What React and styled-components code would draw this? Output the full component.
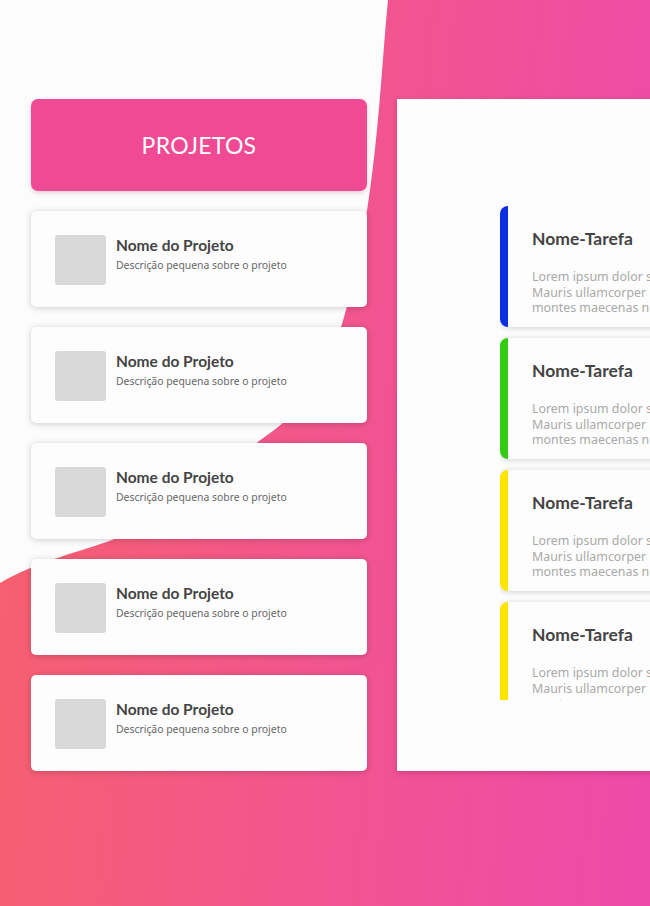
import React from "react";
import styled, { createGlobalStyle } from "styled-components";

const Global = createGlobalStyle`
  html, body { margin: 0; padding: 0; }
  body {
    width: 650px;
    height: 906px;
    overflow: hidden;
    background: linear-gradient(95deg, #f6616b 0%, #f2578a 45%, #ee4aaa 100%);
    font-family: "Lato", "Noto Sans", sans-serif;
  }
`;

const Backdrop = styled.svg`
  position: absolute;
  left: 0;
  top: 0;
  width: 650px;
  height: 906px;
  z-index: 0;
`;

const Page = styled.div`
  position: relative;
  z-index: 1;
  display: flex;
  gap: 30px;
  padding: 99px 0 0 31px;
  width: 650px;
  height: 906px;
  box-sizing: border-box;
  overflow: hidden;
`;

const Column = styled.div`
  display: flex;
  flex-direction: column;
  gap: 20px;
  width: 336px;
  flex-shrink: 0;
`;

const Header = styled.div`
  height: 92px;
  border-radius: 7px;
  background: #ef4a93;
  box-shadow: 0 2px 5px rgba(120, 0, 40, 0.18);
  display: flex;
  align-items: center;
  justify-content: center;
  color: #ffffff;
  font-family: "Lato", sans-serif;
  font-size: 23px;
  font-weight: 400;
  letter-spacing: 0.3px;
`;

const ProjectCard = styled.div`
  height: 96px;
  box-sizing: border-box;
  border-radius: 5px;
  background: #fdfdfd;
  box-shadow: 0 1px 6px rgba(0, 0, 0, 0.2);
  display: flex;
  align-items: flex-start;
  gap: 10px;
  padding: 24px;
`;

const Thumb = styled.div`
  width: 51px;
  height: 50px;
  border-radius: 3px;
  background: #d9d9d9;
  flex-shrink: 0;
`;

const ProjectText = styled.div`
  display: flex;
  flex-direction: column;
  padding-top: 1px;
`;

const ProjectTitle = styled.div`
  font-family: "Lato", sans-serif;
  font-size: 15.5px;
  line-height: 18px;
  font-weight: 700;
  color: #444444;
`;

const ProjectDesc = styled.div`
  margin-top: 5px;
  font-family: "Noto Sans", sans-serif;
  font-size: 10.4px;
  line-height: 12px;
  color: #666666;
`;

const Panel = styled.div`
  width: 420px;
  height: 672px;
  flex-shrink: 0;
  background: #fdfdfd;
  box-shadow: 0 2px 6px rgba(110, 0, 50, 0.25);
  padding: 107px 0 0 103px;
  box-sizing: border-box;
`;

const TaskList = styled.div`
  height: 494px;
  overflow: hidden;
  display: flex;
  flex-direction: column;
  gap: 11px;
  padding-right: 20px;
`;

const TaskCard = styled.div`
  height: 121px;
  flex-shrink: 0;
  box-sizing: border-box;
  border-radius: 8px;
  background: #fdfdfd;
  box-shadow: 0 1px 6px rgba(0, 0, 0, 0.18);
  border-left: 8px solid ${(p) => p.$color};
  padding: 23px 0 0 24px;
  width: 300px;
`;

const TaskTitle = styled.div`
  font-family: "Lato", sans-serif;
  font-size: 17.5px;
  line-height: 20px;
  font-weight: 700;
  color: #444444;
`;

const TaskBody = styled.div`
  margin-top: 20px;
  font-family: "Noto Sans", sans-serif;
  font-size: 12.4px;
  line-height: 15.5px;
  color: #a9a9a9;
  white-space: nowrap;
`;

const projects = [0, 1, 2, 3, 4];
const tasks = ["#0a2ee0", "#34cc12", "#ffe400", "#ffe400"];

export default function App() {
  return (
    <>
      <Global />
      <Backdrop viewBox="0 0 650 906" preserveAspectRatio="none">
        <path
          d="M0,0 H388 C380,80 377,200 346,310 C 326,385 300,412 266,436 C 222,468 165,520 112,540 C 80,552 40,560 0,583 Z"
          fill="#fcfcfc"
        />
      </Backdrop>
      <Page>
        <Column>
          <Header>PROJETOS</Header>
          {projects.map((i) => (
            <ProjectCard key={i}>
              <Thumb />
              <ProjectText>
                <ProjectTitle>Nome do Projeto</ProjectTitle>
                <ProjectDesc>Descrição pequena sobre o projeto</ProjectDesc>
              </ProjectText>
            </ProjectCard>
          ))}
        </Column>
        <Panel>
          <TaskList>
            {tasks.map((c, i) => (
              <TaskCard key={i} $color={c}>
                <TaskTitle>Nome-Tarefa</TaskTitle>
                <TaskBody>
                  Lorem ipsum dolor sit amet, consectetur
                  <br />
                  Mauris ullamcorper nisi sed
                  <br />
                  montes maecenas nulla
                </TaskBody>
              </TaskCard>
            ))}
          </TaskList>
        </Panel>
      </Page>
    </>
  );
}
